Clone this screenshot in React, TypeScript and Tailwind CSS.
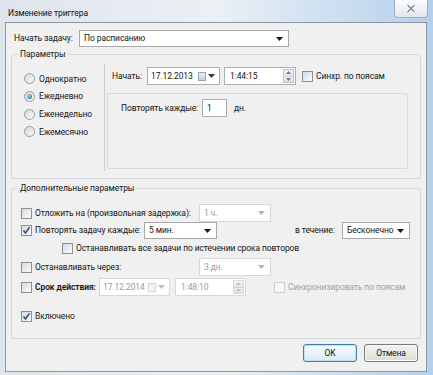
import React from "react";

const Tri = ({ color = "#1a1a1a" }: { color?: string }) => (
    <svg width="7" height="4" viewBox="0 0 7 4" className="shrink-0">
        <path d="M0 0h7L3.5 4z" fill={color} />
    </svg>
);

// Win7 style checkbox
const Box = ({ checked, disabled }: { checked?: boolean; disabled?: boolean }) => (
    <span
        className={`flex h-[11px] w-[11px] shrink-0 items-center justify-center border ${
            disabled
                ? "border-[#d0d0d0] bg-[#f7f7f7]"
                : "border-[#8f8f8f] bg-gradient-to-br from-[#d5d9de] to-[#fbfbfb]"
        }`}
    >
        {checked && (
            <svg width="9" height="9" viewBox="0 0 9 9">
                <path d="M1.5 4.6l2 2.4 4-5.8" stroke="#34487e" strokeWidth="1.5" fill="none" />
            </svg>
        )}
    </span>
);

const Radio = ({ on }: { on?: boolean }) => (
    <span className="flex h-[11px] w-[11px] shrink-0 items-center justify-center rounded-full border border-[#9a9a9a] bg-gradient-to-br from-[#d3d7db] to-[#fafafa]">
        {on && (
            <span className="h-[5px] w-[5px] rounded-full bg-[radial-gradient(circle_at_35%_35%,#9ad8ea,#1c5d78)]" />
        )}
    </span>
);

const Combo = ({
    value,
    className = "",
    disabled,
}: {
    value: string;
    className?: string;
    disabled?: boolean;
}) => (
    <div
        className={`flex shrink-0 items-center justify-between border bg-white pl-[4px] pr-[5px] ${
            disabled ? "border-[#d8d8d8] text-[#9c9c9c]" : "border-[#a9a9a9]"
        } ${className}`}
    >
        <span>{value}</span>
        <Tri color={disabled ? "#b4b4b4" : "#1a1a1a"} />
    </div>
);

const DateBox = ({
    value,
    className = "",
    disabled,
}: {
    value: string;
    className?: string;
    disabled?: boolean;
}) => (
    <div
        className={`flex h-[18px] shrink-0 items-center border bg-white ${
            disabled ? "border-[#d8d8d8] text-[#9c9c9c]" : "border-[#abadb3]"
        } ${className}`}
    >
        <span className="flex-1 pl-[3px]">{value}</span>
        <span className="mr-[4px] flex items-center gap-[2px]">
            <span
                className={`h-[9px] w-[8px] border ${
                    disabled
                        ? "border-[#d4d4d4] bg-[#f3f3f3]"
                        : "border-[#9ba3ab] bg-gradient-to-b from-[#eef1f4] to-[#c9d0d6]"
                }`}
            />
            <Tri color={disabled ? "#bdbdbd" : "#3a3a3a"} />
        </span>
    </div>
);

const Spin = ({ disabled }: { disabled?: boolean }) => (
    <span
        className={`mr-[1px] flex h-[14px] w-[11px] flex-col border ${
            disabled ? "border-[#dadada]" : "border-[#b9c4cf]"
        }`}
    >
        <span className="flex flex-1 items-center justify-center bg-gradient-to-b from-[#f4f7fa] to-[#dfe7ee]">
            <svg width="5" height="3" viewBox="0 0 5 3">
                <path d="M0 3h5L2.5 0z" fill={disabled ? "#c3c3c3" : "#6b7c8c"} />
            </svg>
        </span>
        <span className="flex flex-1 items-center justify-center border-t border-[#c9d2db] bg-gradient-to-b from-[#eef3f7] to-[#d7e0e8]">
            <svg width="5" height="3" viewBox="0 0 5 3">
                <path d="M0 0h5L2.5 3z" fill={disabled ? "#c3c3c3" : "#6b7c8c"} />
            </svg>
        </span>
    </span>
);

const TimeBox = ({
    value,
    className = "",
    disabled,
}: {
    value: string;
    className?: string;
    disabled?: boolean;
}) => (
    <div
        className={`flex h-[18px] shrink-0 items-center border bg-white ${
            disabled ? "border-[#d8d8d8] text-[#9c9c9c]" : "border-[#abadb3]"
        } ${className}`}
    >
        <span className="flex-1 pl-[5px]">{value}</span>
        <Spin disabled={disabled} />
    </div>
);

export default function App() {
    return (
        <div className="h-[375px] w-[433px] overflow-hidden whitespace-nowrap bg-gradient-to-r from-[#dfe5ec] via-[#ebf0f5] to-[#b3d1ec] pl-[5px] font-['Roboto',sans-serif] text-[8.5px] leading-none tracking-[-0.1px] text-[#151515]">
            {/* Title bar */}
            <div className="flex h-[22px] items-start">
                <span className="mt-[9px] pl-[3px] text-[#111]">Изменение триггера</span>
                <div className="ml-auto mr-[5px] flex h-[18px] w-[34px] items-center justify-center rounded-b-[4px] border border-t-0 border-[#a3adb9] bg-gradient-to-b from-[#fbfcfd] to-[#e2e8ee]">
                    <svg width="10" height="9" viewBox="0 0 10 9">
                        <path d="M1.5 1l7 7M8.5 1l-7 7" stroke="#ffffff" strokeWidth="3" />
                        <path d="M1.5 1l7 7M8.5 1l-7 7" stroke="#7c838b" strokeWidth="1.3" />
                    </svg>
                </div>
            </div>

            {/* Client area */}
            <div className="flex h-[350px] w-[422px] flex-col border border-[#8b96a2] bg-[#f0f0f0]">
                <div className="ml-[8px] mt-[7px] flex h-[17px] items-center">
                    <span className="w-[65px]">Начать задачу:</span>
                    <Combo value="По расписанию" className="h-[17px] w-[210px]" />
                </div>

                <fieldset className="ml-[5px] mt-[1px] h-[131px] w-[410px] rounded-[3px] border border-[#d3d9de]">
                    <legend className="ml-[6px] px-[2px] leading-[12px]">Параметры</legend>
                    <div className="flex">
                        <div className="flex w-[92px] flex-col pl-[12px] pt-[10px]">
                            {[
                                ["Однократно", false],
                                ["Ежедневно", true],
                                ["Еженедельно", false],
                                ["Ежемесячно", false],
                            ].map(([label, on]) => (
                                <div key={label as string} className="flex h-[17.7px] items-center">
                                    <Radio on={on as boolean} />
                                    <span className="ml-[4px]">{label}</span>
                                </div>
                            ))}
                        </div>
                        <div className="mt-[4px] h-[107px] w-[1px] bg-[#cdcdcd]" />
                        <div className="flex flex-col pt-[7px]">
                            <div className="flex h-[18px] items-center pl-[7px]">
                                <span className="w-[35px]">Начать:</span>
                                <DateBox value="17.12.2013" className="w-[73px]" />
                                <TimeBox value="1:44:15" className="ml-[4px] w-[72px]" />
                                <span className="ml-[6px]">
                                    <Box />
                                </span>
                                <span className="ml-[3px]">Синхр. по поясам</span>
                            </div>
                            <div className="ml-[2px] mt-[8px] h-[76px] w-[301px] rounded-[2px] border border-[#dadada] pl-[13px] pt-[5px]">
                                <div className="flex h-[18px] items-center">
                                    <span className="w-[81px]">Повторять каждые:</span>
                                    <span className="flex h-[18px] w-[25px] items-center border border-[#abadb3] bg-white pl-[4px]">
                                        1
                                    </span>
                                    <span className="ml-[7px]">дн.</span>
                                </div>
                            </div>
                        </div>
                    </div>
                </fieldset>

                <fieldset className="ml-[5px] mt-[3px] h-[157px] w-[410px] rounded-[3px] border border-[#d3d9de] pl-[9px]">
                    <legend className="ml-[-3px] px-[2px] leading-[12px]">Дополнительные параметры</legend>

                    <div className="mt-[10px] flex h-[18px] items-center">
                        <Box />
                        <span className="ml-[3px] w-[164px]">Отложить на (произвольная задержка):</span>
                        <Combo value="1 ч." disabled className="h-[18px] w-[72px]" />
                    </div>

                    <div className="flex h-[17px] items-center">
                        <Box checked />
                        <span className="ml-[3px] w-[109px]">Повторять задачу каждые:</span>
                        <Combo value="5 мин." className="h-[17px] w-[73px]" />
                        <span className="ml-[78px] w-[47px]">в течение:</span>
                        <Combo value="Бесконечно" className="h-[17px] w-[68px]" />
                    </div>

                    <div className="flex h-[18px] items-center pl-[41px]">
                        <Box />
                        <span className="ml-[3px]">Останавливать все задачи по истечении срока повторов</span>
                    </div>

                    <div className="mt-[1px] flex h-[18px] items-center">
                        <Box />
                        <span className="ml-[3px] w-[64px]">Останавливать через:</span>
                        <span className="ml-[100px]">
                            <Combo value="3 дн." disabled className="h-[18px] w-[72px]" />
                        </span>
                    </div>

                    <div className="mt-[2px] flex h-[18px] items-center">
                        <Box />
                        <span className="ml-[3px] w-[64px] font-semibold">Срок действия:</span>
                        <DateBox value="17.12.2014" disabled className="w-[71px]" />
                        <TimeBox value="1:48:10" disabled className="ml-[5px] w-[71px]" />
                        <span className="ml-[28px]">
                            <Box disabled />
                        </span>
                        <span className="ml-[3px] text-[#a2a2a2]">Синхронизировать по поясам</span>
                    </div>

                    <div className="mt-[11px] flex h-[18px] items-center">
                        <Box checked />
                        <span className="ml-[3px]">Включено</span>
                    </div>
                </fieldset>

                <div className="mr-[8px] mt-[5px] flex justify-end gap-[7px]">
                    <button className="flex h-[18px] w-[54px] items-center justify-center rounded-[3px] border border-[#3c7fb1] bg-gradient-to-b from-[#f7fbfe] to-[#dde9f3] shadow-[inset_0_0_0_1px_#bfe0f6]">
                        OK
                    </button>
                    <button className="flex h-[18px] w-[54px] items-center justify-center rounded-[3px] border border-[#7a7a7a] bg-gradient-to-b from-[#f4f4f4] to-[#dcdcdc] shadow-[inset_0_0_0_1px_#fbfbfb]">
                        Отмена
                    </button>
                </div>
            </div>
        </div>
    );
}
